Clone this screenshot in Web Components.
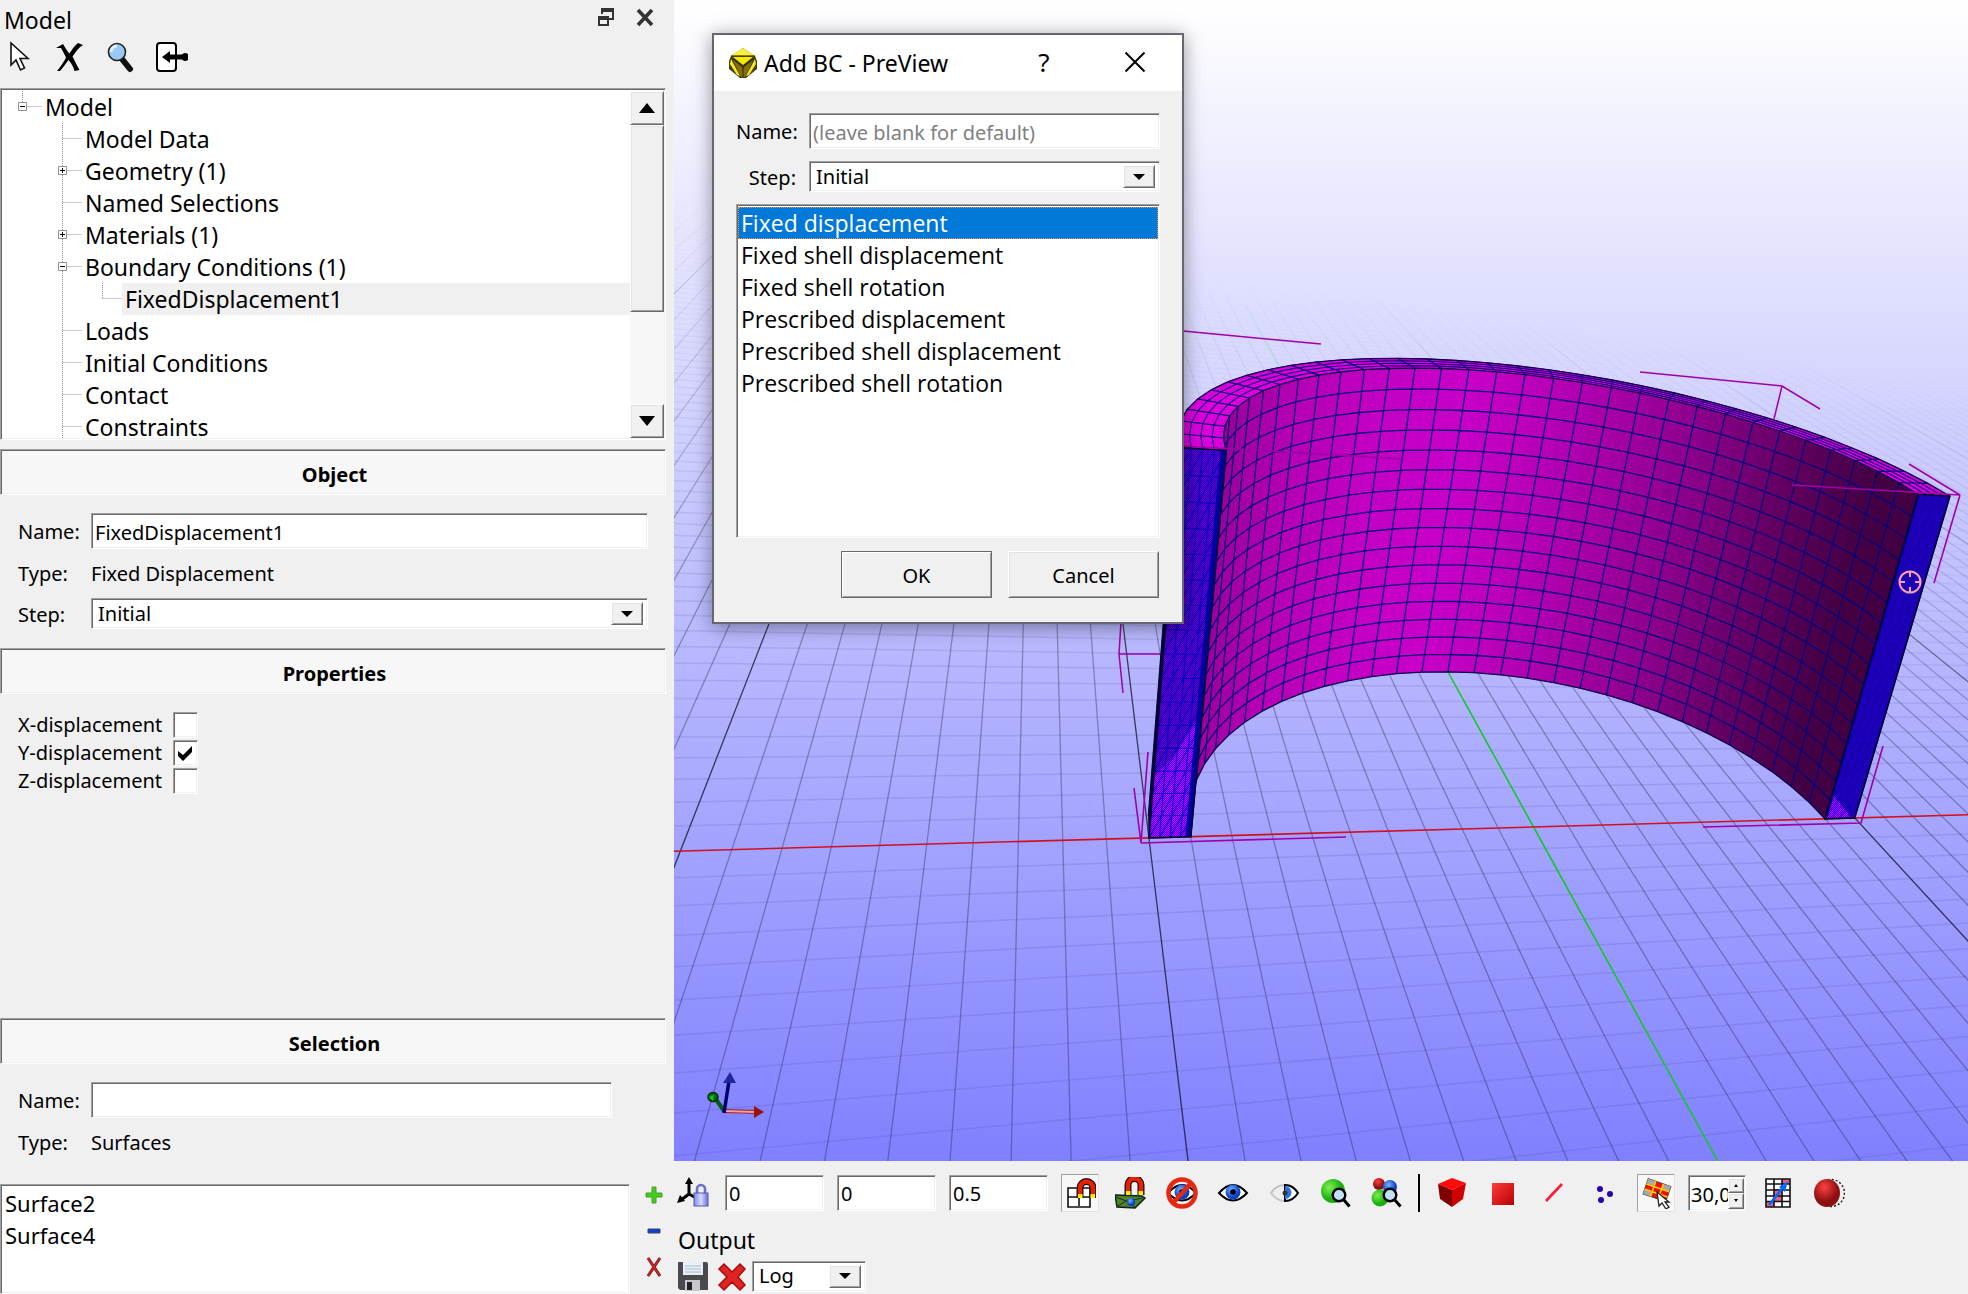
<!DOCTYPE html>
<html lang="en">
<head>
<meta charset="utf-8">
<title>PreView</title>
<style>
  html, body { margin: 0; height: 100%; background: #f0f0f0; overflow: hidden; }
  body { --ui: "Noto Sans", "Open Sans", sans-serif; --view: "Noto Sans", "Open Sans", sans-serif; color: #000; font: 20px/24px var(--ui); }
</style>
</head>
<body>
<preview-app></preview-app>
<script>
const base = `
  *, *::before { box-sizing: border-box; }
  svg { display: block; }
  button, input, select { font: inherit; color: inherit; margin: 0; border-radius: 0; outline: none; }
  .sunken { border: 1px solid; border-color: #a0a0a0 #fff #fff #a0a0a0; box-shadow: inset 1px 1px #696969, inset -1px -1px #f0f0f0; background: #fff; }
  .raised { border: 1px solid; border-color: #fff #696969 #696969 #fff; box-shadow: inset 1px 1px #e3e3e3, inset -1px -1px #a0a0a0; background: #f0f0f0; }
  input[type=text] { height: 36px; min-width: 0; padding: 2px 3px 0; }
  .combo { position: relative; display: block; height: 31px; }
  .combo select { appearance: none; width: 100%; height: 100%; padding: 0 40px 0 6px; line-height: 24px; }
  .combo i { position: absolute; right: 5px; top: 4px; bottom: 4px; width: 32px; display: grid; place-items: center; pointer-events: none; }
  .combo i::before { content: ""; border: 6px solid transparent; border-top-color: #000; border-bottom: 0; }
  .tool { display: grid; place-items: center; flex: none; width: 38px; height: 38px; padding: 0; border: 0; background: none; }
  .tool.on { border: 1px solid; border-color: #a0a0a0 #e3e3e3 #e3e3e3 #a0a0a0; background: #f7f7f7; }
`;
const combo = (id, opts) => `<span class="combo"><select class="sunken" id="${id}" aria-label="${id}">${opts.map(o => `<option>${o}</option>`).join('')}</select><i class="raised"></i></span>`;
function define(name, css, html, init) {
  const t = document.createElement('template');
  t.innerHTML = `<style>${base}${css}</style>${html}`;
  customElements.define(name, class extends HTMLElement {
    constructor() {
      super();
      const root = this.attachShadow({ mode: 'open' });
      root.append(t.content.cloneNode(true));
      if (init) init(root, this);
    }
  });
}

const magnet = (x, y) => `<g transform="translate(${x} ${y})"><path d="M3 18V8a6.500 6.500 0 0 1 13 0v10" fill="none" stroke="#111" stroke-width="7"/><path d="M3 17V8a6.500 6.500 0 0 1 13 0v9" fill="none" stroke="#e82000" stroke-width="4.500"/><path d="M1 14h4.500v4H1zM13.500 14H18v4h-4.500z" fill="#fe0"/></g>`;
const eye = `<path d="M2 16Q16 0 30 16Q16 31 2 16z" fill="#fff" stroke="#000" stroke-width="2"/><circle cx="16" cy="15" r="7.500" fill="url(#b)"/><circle cx="16" cy="15" r="2.800" fill="#001"/>`;
const lens = `<circle cx="20" cy="18" r="6.300" fill="#bfe0f6" stroke="#000" stroke-width="2.400"/><path d="M24.500 22.500l6 7" stroke="#000" stroke-width="3"/>`;
const defs = `<defs><radialGradient id="b" cx=".4" cy=".35"><stop offset="0" stop-color="#7ab4ff"/><stop offset="1" stop-color="#0840c8"/></radialGradient><radialGradient id="g" cx=".35" cy=".35"><stop offset="0" stop-color="#80f050"/><stop offset="1" stop-color="#18b010"/></radialGradient><radialGradient id="r" cx=".4" cy=".3"><stop offset="0" stop-color="#ff4040"/><stop offset="1" stop-color="#8c1010"/></radialGradient><linearGradient id="s" x2="1" y2="1"><stop offset="0" stop-color="#ff3c3c"/><stop offset="1" stop-color="#b80000"/></linearGradient><linearGradient id="l" x2="1"><stop offset="0" stop-color="#8088e0"/><stop offset=".5" stop-color="#d8daff"/><stop offset="1" stop-color="#6870d0"/></linearGradient></defs>`;
const icons = {
  cursor: `<path d="M8 2v22l5-5 4.500 10 4-2-4.500-9.500h8z" fill="#fff" stroke="#111" stroke-width="1.600"/>`,
  del: `<path d="M2 7l7-4c2 3 4 7 6.500 9.500C18 9 20 5 24 2l5 2c-5 3-8 8-10.500 11.500C21 20 23 25 25.500 29l-5 1c-1-4-3-8-6-11-2.500 3-5 7-8.500 11H3c4-5 7-9 9-13.500C10 12 8 9 7 7z" fill="#000"/>`,
  find: `<path d="M17 18l8 10" stroke="#111" stroke-width="6" stroke-linecap="round"/><circle cx="12" cy="11" r="8.500" fill="#9cc8f4" stroke="#222" stroke-width="1.600"/><path d="M6 11a6 6 0 0 1 6-6" stroke="#dcefff" stroke-width="3" fill="none"/>`,
  leave: `<rect x="1" y="2" width="19" height="28" rx="3" fill="#fff" stroke="#000" stroke-width="2"/><path d="M6 16l8-6v3.500h12a4 4 0 1 1 0 5H14V22z" fill="#000"/>`,
  axes: `<path d="M12 17V5M12 17L4 23M12 17l9 5" stroke="#000" stroke-width="3"/><path d="M12 0l4 7H8zM0 26l3-8 5 6z" fill="#000"/><path d="M20 17v-5a4 4 0 0 1 8 0v5" fill="none" stroke="#6870c8" stroke-width="2.600"/><rect x="17" y="16" width="14" height="13" fill="url(#l)" stroke="#5058b8"/>`,
  snapgrid: `<path d="M4 11h22v19H4zM4 20h22M15 10v19" fill="#fff" stroke="#111" stroke-width="1.600"/>${magnet(13, 3)}`,
  snapmesh: `<path d="M0 18l27 1 3 2-10 10-18-1z" fill="#4c8426" stroke="#122" stroke-width="1.500"/><path d="M1 20l10 4 17-3M3 29l8-5 9 6" stroke="#183010" fill="none"/>${magnet(10, 0)}<circle cx="16" cy="25" r="4" fill="url(#b)"/>`,
  hide: `${eye}<circle cx="16" cy="16" r="13.500" fill="none" stroke="#e52810" stroke-width="4.500"/><path d="M25 6L7 26" stroke="#e52810" stroke-width="4.500"/>`,
  show: eye,
  half: `<path d="M17 8Q8 8 3 16q6 8 14 8z" fill="#eee" stroke="#c4c4c4" stroke-width="2"/><path d="M17 8q8 0 13 8-5 8-13 8z" fill="#fff" stroke="#000" stroke-width="2"/><path d="M17 9a6.500 6.500 0 0 1 0 13z" fill="#2a70e8"/><circle cx="17" cy="16" r="2.500" fill="#333"/>`,
  zoomone: `<circle cx="14" cy="14" r="12" fill="url(#g)"/>${lens}`,
  zoommany: `<circle cx="9" cy="7" r="6" fill="url(#r)"/><circle cx="20" cy="10" r="7" fill="url(#b)"/><circle cx="10" cy="21" r="8.500" fill="url(#g)"/>${lens}`,
  cube: `<path d="M2 7l14-6 14 5-14 7z" fill="#ff0a0a"/><path d="M2 7l14 6v17L4 22z" fill="#7e0000"/><path d="M16 13l14-7-3 16-11 8z" fill="#d00000"/>`,
  square: `<path d="M5 6h22v22H5z" fill="url(#s)"/>`,
  line: `<path d="M8 24L24 7" stroke="#ff1838" stroke-width="2.600"/>`,
  dots: `<g fill="#2800b0"><circle cx="11" cy="12" r="3"/><circle cx="21" cy="17" r="3"/><circle cx="12" cy="23" r="3"/></g>`,
  pick: `<g transform="rotate(19 16 16)"><path d="M4 5h24v16H4z" fill="#ee1000" stroke="#444"/><path d="M4 5h8v5H4zM20 5h8v5h-8zM4 16h8v5H4z" fill="#a8a8a8"/><path d="M4 10.500h24M4 16h24M12 5v16M20 5v16" stroke="#fc0" stroke-width="1.600"/></g><path d="M17 15l2 14 3-3 4 6 3-2-4-5h4z" fill="#fff" stroke="#222" stroke-width="1.300"/>`,
  table: `<path d="M4 2h24v28H4z" fill="#fff"/><path d="M4 25h8v5H4zM12 12h8v12h-8zM20 2h8v5h-8z" fill="#e86080"/><path d="M4 2h24v28H4zM4 7h24M4 13h24M4 19h24M4 24.500h24M12 2v28M20 2v28" fill="none" stroke="#111" stroke-width="1.600"/><path d="M7 28L22 9" stroke="#0868ff" stroke-width="2.600"/><path d="M26 4l-3 11-6-5z" fill="#0868ff"/>`,
  ball: `<circle cx="18" cy="16" r="13.500" fill="none" stroke="#222" stroke-width="1.500" stroke-dasharray="2 2"/><ellipse cx="14" cy="16" rx="13" ry="14" fill="url(#r)"/>`,
  save: `<path d="M1 2h28a2 2 0 0 1 2 2v26H3l-2-2z" fill="#4a4a4e"/><path d="M6 2h20v13H6z" fill="#e8eff6"/><path d="M8 6h16M8 9h16M8 12h16" stroke="#a9bccb"/><path d="M8 20h15v11H8z" fill="#c8c8cc"/><path d="M10 22h5v8h-5z" fill="#222"/>`,
  cross: `<path d="M8 4l8 8 8-8 5 5-7 8 7 8-5 5-8-8-8 8-5-5 8-8-8-8z" fill="#e02424" stroke="#a80c0c" stroke-width="1.500"/>`,
  plus: `<path d="M14 8h4v6h6v4h-6v6h-4v-6H8v-4h6z" fill="#3ed01c" stroke="#4a9a30"/>`,
  minus: `<path d="M10 14h12v4H10z" fill="#0a3cd8" stroke="#446"/>`,
  clear: `<path d="M10 7l12 18M22 7L10 25" stroke="#7c1414" stroke-width="3"/><path d="M10 7l12 18M22 7L10 25" stroke="#c42a2a" stroke-width="1.500"/>`,
  float: `<path d="M12 12V7h11v10h-5" fill="none" stroke="#333" stroke-width="2"/><path d="M11 6h13v4H11zM8 14h11v4H8z" fill="#333"/><path d="M9 15v8h9v-8" fill="none" stroke="#333" stroke-width="2"/>`,
  shut: `<path d="M9 8l14 15M23 8L9 23" stroke="#333" stroke-width="3.600"/>`,
};
customElements.define('tool-icon', class extends HTMLElement {
  constructor() { super(); this.attachShadow({ mode: 'open' }); }
  connectedCallback() {
    this.shadowRoot.innerHTML = `<style>:host{display:block;width:32px;height:32px}svg{display:block}</style><svg width="32" height="32" viewBox="0 0 32 32" aria-hidden="true">${defs}${icons[this.getAttribute('name')]}</svg>`;
  }
});
const tool = (name, label, on) => `<button class="tool${on ? ' on' : ''}" aria-label="${label}"><tool-icon name="${name}"></tool-icon></button>`;

define('section-title', `
  :host { display: block; }
  h2.sunken { margin: 0; height: 46px; display: grid; place-items: center; font: bold 20px/24px var(--ui); background: #f7f7f7; padding: 5px 0 0 3px; }
`, `<h2 class="sunken"><slot></slot></h2>`);

define('model-tree', `
  :host { display: flex; height: 352px; font: 23px/32px var(--view); overflow: hidden; padding: 2px 1px 1px 1px; }
  .rows { flex: 1; overflow: hidden; }
  .row { display: flex; height: 32px; }
  .row b { flex: 1; font-weight: 400; padding-left: 3px; }
  .row.sel b { background: #f0f0f0; }
  .bar { width: 34px; display: flex; flex-direction: column; background: #f7f7f7; }
  .bar button { height: 34px; padding: 0; display: grid; place-items: center; }
  .thumb { height: 187px; }
  .gap { flex: 1; }
`, `<div class="rows" role="tree"></div><div class="bar"><button class="raised" aria-label="Scroll up"><svg width="16" height="10"><path d="M0 10L8 0l8 10z"/></svg></button><div class="raised thumb"></div><div class="gap"></div><button class="raised" aria-label="Scroll down"><svg width="16" height="10"><path d="M0 0l8 10 8-10z"/></svg></button></div>`,
root => {
  const data = [[0, '-', 'Model'], [1, '', 'Model Data'], [1, '+', 'Geometry (1)'], [1, '', 'Named Selections'], [1, '+', 'Materials (1)'], [1, '-', 'Boundary Conditions (1)'], [2, '', 'FixedDisplacement1'], [1, '', 'Loads'], [1, '', 'Initial Conditions'], [1, '', 'Contact'], [1, '', 'Constraints']];
  root.querySelector('.rows').innerHTML = data.map(([l, m, t]) => {
    const x = 20.5 + 40 * l, w = 40 + 40 * l;
    let p = `M${x} 15.5H${w}`;
    if (l !== 1) p += `M${x} 0V16`;
    if (l > 0) p += 'M60.5 0V32';
    const box = m ? `<path d="M${x - 4} 11.5h8v8h-8z" fill="#fff" stroke="#909090"/><path d="M${x - 2.5} 15.5h5${m === '+' ? `M${x} 13v5` : ''}" stroke="#000"/>` : '';
    return `<div class="row${l === 2 ? ' sel' : ''}" role="treeitem"><svg width="${w}" height="32"><path d="${p}" stroke="#909090" stroke-dasharray="1 1"/>${box}</svg><b>${t}</b></div>`;
  }).join('');
});

define('model-dock', `
  :host { display: flex; flex-direction: column; min-height: 0; }
  header { display: flex; align-items: center; height: 38px; padding: 0 10px 0 4px; font: 23px/26px var(--view); }
  header span { flex: 1; padding-top: 2px; }
  header .tool { height: 36px; margin-bottom: 2px; }
  header .tool + .tool { margin-left: 1px; }
  .tools { display: flex; gap: 13px; height: 50px; }
  .body { flex: 1; display: flex; flex-direction: column; width: 666px; min-height: 0; }
  model-tree { margin-bottom: 9px; }
  .form { display: grid; grid-template-columns: 63px 1fr; column-gap: 10px; align-items: center; padding: 18px 18px 19px; }
  .form label { padding-top: 2px; }
  .form .type { height: 49px; line-height: 50px; }
  .checks { flex: 1; display: flex; flex-direction: column; padding: 17px 18px; }
  .checks label { display: flex; align-items: center; gap: 9px; height: 28px; white-space: nowrap; }
  .checks span { width: 146px; }
  .checks input { appearance: none; width: 25px; height: 26px; }
  .checks svg { grid-area: 1/1; pointer-events: none; }
  .box { display: grid; place-items: center; }
  .box input { grid-area: 1/1; }
  .s2 { padding-right: 54px; padding-bottom: 17px; }
  .pick { display: flex; height: 110px; }
  ul { flex: 1; margin: 0; padding: 2px 4px; list-style: none; font: 22px/32px var(--view); }
  .ops { width: 36px; margin: -7px -6px 0 6px; display: flex; flex-direction: column; align-items: center; }
  .ops .tool { height: 36px; }
`, `
  <header><span>Model</span>${tool('float', 'Float')}${tool('shut', 'Close')}</header>
  <div class="tools">${tool('cursor', 'Select')}${tool('del', 'Delete')}${tool('find', 'Find')}${tool('leave', 'Export')}</div>
  <div class="body">
    <model-tree class="sunken"></model-tree>
    <section-title>Object</section-title>
    <div class="form">
      <label for="on">Name:</label><input class="sunken" type="text" id="on" value="FixedDisplacement1">
      <span class="type">Type:</span><span class="type">Fixed Displacement</span>
      <label for="Step">Step:</label>${combo('Step', ['Initial'])}
    </div>
    <section-title>Properties</section-title>
    <div class="checks">
      <label><span>X-displacement</span><input class="sunken" type="checkbox"></label>
      <label><span>Y-displacement</span><div class="box"><input class="sunken" type="checkbox" checked><svg width="15" height="15"><path d="M0 5l5 4 9-9v6l-9 9-5-5z"/></svg></div></label>
      <label><span>Z-displacement</span><input class="sunken" type="checkbox"></label>
    </div>
    <section-title>Selection</section-title>
    <div class="form s2">
      <label for="sn">Name:</label><input class="sunken" type="text" id="sn">
      <span class="type">Type:</span><span class="type">Surfaces</span>
    </div>
    <div class="pick"><ul class="sunken"><li>Surface2</li><li>Surface4</li></ul>
      <div class="ops">${tool('plus', 'Add')}${tool('minus', 'Remove')}${tool('clear', 'Clear')}</div></div>
  </div>`);

define('scene-view', `
  :host { display: block; min-height: 0; overflow: hidden; background: linear-gradient(#fff, #8080ff); }
  svg { width: 100%; height: 100%; }
`, `<svg viewBox="674 0 1294 1161" preserveAspectRatio="xMinYMin slice" role="img" aria-label="Half cylinder mesh"></svg>`,
root => {
  /* Projection of world x, y and height (0..1) to view coordinates. */
  const P = (x, y, z) => {
    const w = 1 + .00897 * x + .02328 * y - .0985 * z;
    return [(1533.5 + 48.76 * x + 24.19 * y - 88.35 * z) / w, (827 + 6.43 * x - 1.606 * y - 399.4 * z) / w];
  };
  const f = p => p[0].toFixed(1) + ' ' + p[1].toFixed(1);
  const L = (a, b) => `M${f(a)}L${f(b)}`;
  let minorX = '', major = '', minorY = '';
  for (let i = -45; i <= 95; i++) {
    if (!i) continue;
    const s = L(P(i, -15, 0), P(i, 75, 0));
    if (i % 10) minorX += s; else major += s;
  }
  for (let j = -15; j <= 75; j++) if (j) minorY += L(P(-45, j, 0), P(95, j, 0));
  const N = 32, M = 16, ri = 9, ro = 10;
  const A = (i, r, z) => { const t = Math.PI * (1 - i / N); return P(r * Math.cos(t), r * Math.sin(t), z); };
  const quad = (pts, c) => `<path d="M${pts.map(f).join('L')}z" fill="${c}" stroke="${c}" stroke-width=".6"/>`;
  const stops = [[0, 140], [4, 158], [8, 180], [12, 196], [15, 200], [17, 190], [20, 168], [23, 142], [26, 105], [28, 84], [30, 68], [32, 66]];
  const shade = i => { let k = 1; while (stops[k][0] < i) k++; const [a, u] = stops[k - 1], [b, v] = stops[k]; const g = Math.round(u + (v - u) * (i - a) / (b - a)); return `rgb(${g},0,${g})`; };
  let back = '', inner = '', top = '', mesh = '', tmesh = '';
  for (let i = 0; i < N; i++) {
    back += quad([A(i, ro, 0), A(i + 1, ro, 0), A(i + 1, ro, 1), A(i, ro, 1)], '#08003a');
  }
  for (let i = 0; i < N * 2; i++) {
    const a = i / 2, b = a + .5;
    inner += quad([A(a, ri, 0), A(b, ri, 0), A(b, ri, 1), A(a, ri, 1)], shade(a + .25));
    top += quad([A(a, ri, 1), A(b, ri, 1), A(b, ro, 1), A(a, ro, 1)], '#dc00dc');
  }
  const arc = (r, z) => { let s = ''; for (let i = 0; i <= N; i++) s += (i ? 'L' : 'M') + f(A(i, r, z)); return s; };
  for (let i = 0; i <= N; i++) {
    mesh += L(A(i, ri, 0), A(i, ri, 1));
    tmesh += L(A(i, ri, 1), A(i, ro, 1));
  }
  for (let k = 1; k < M; k++) mesh += arc(ri, k / M);
  let tarcs = '';
  for (let k = 1; k < 4; k++) tarcs += arc(ri + k / 4, 1);
  const rim = arc(ri, 0) + arc(ri, 1) + arc(ro, 1);
  const poly = pts => 'M' + pts.map(f).join('L') + 'z';
  const end = (s, pat, bright) => {
    const o = s * ro, n = s * ri, x0 = s < 0 ? -10 : 9;
    let g = '', d = '';
    for (let k = 1; k < M; k++) g += L(P(o, 0, k / M), P(n, 0, k / M));
    for (let k = 1; k < 4; k++) g += L(P(s * (ri + k / 4), 0, 0), P(s * (ri + k / 4), 0, 1));
    for (let k = 0; k < M; k++) for (let q = 0; q < 4; q++) d += L(P(x0 + q / 4, 0, k / M), P(x0 + (q + 1) / 4, 0, (k + 1) / M));
    return `<path d="${poly([P(o, 0, 0), P(n, 0, 0), P(n, 0, 1), P(o, 0, 1)])}" fill="url(#${pat})"/><path d="${poly(bright)}" fill="url(#pm)"/>
      <path d="${g}${d}" stroke="#0000c0" stroke-width="1.200" fill="none" opacity="${s < 0 ? .8 : .4}"/>
      <path d="${L(P(n, 0, 0), P(n, 0, 1))}" stroke="#0000a0" stroke-width="${s < 0 ? 5 : 2}" transform="translate(${s < 0 ? -3 : 1} 0)"/>
      <path d="${poly([P(o, 0, 0), P(n, 0, 0), P(n, 0, 1), P(o, 0, 1)])}" fill="none" stroke="#000030" stroke-width="1.600"/>`;
  };
  root.querySelector('svg').innerHTML = `
  <defs>
    <linearGradient id="fade" gradientUnits="userSpaceOnUse" x1="1360" y1="290" x2="1300" y2="680"><stop offset="0" stop-color="#000"/><stop offset=".35" stop-color="#444"/><stop offset="1" stop-color="#fff"/></linearGradient>
    <mask id="m" maskUnits="userSpaceOnUse" x="674" y="0" width="1294" height="1161"><path d="M674 0h1294v1161H674z" fill="url(#fade)"/></mask>
    <pattern id="pl" width="2" height="2" patternUnits="userSpaceOnUse"><path d="M0 0h2v2H0z" fill="#1800e0"/><path d="M0 0h1v1H0zM1 1h1v1H1z" fill="#7800a8"/></pattern>
    <pattern id="pr" width="2" height="2" patternUnits="userSpaceOnUse"><path d="M0 0h2v2H0z" fill="#0000e0"/><path d="M0 0h1v1H0zM1 1h1v1H1z" fill="#400088"/></pattern>
    <pattern id="pm" width="2" height="2" patternUnits="userSpaceOnUse"><path d="M0 0h2v2H0z" fill="#2800f0"/><path d="M0 0h1v1H0zM1 1h1v1H1z" fill="#e000f0"/></pattern>
  </defs>
  <g mask="url(#m)" fill="none">
    <path d="${minorY}" stroke="#303070" stroke-opacity=".12" stroke-width="1.500"/>
    <path d="${minorX}" stroke="#202040" stroke-opacity=".36" stroke-width="1.300"/>
    <path d="${major}" stroke="#101020" stroke-opacity=".75" stroke-width="1.300"/>
    <path d="${L(P(0, -15, 0), P(0, 60, 0))}" stroke="#14c828" stroke-width="1.600"/>
  </g>
  <path d="${L(P(-25, 0, 0), P(60, 0, 0))}" stroke="#d01020" stroke-width="1.600"/>
  <g stroke="#a000a8" stroke-width="1.500" fill="none"><path d="M1121 622l-2 32 4 39M1119 654h41M1774 419l8-33M1183 331l138 13M1640 372l142 14 38 23"/></g>
  ${back}${inner}
  <path d="${mesh}" stroke="#08007c" stroke-width="1.300" fill="none"/>
  ${top}
  <path d="${tmesh}" stroke="#10007c" stroke-width="1.200" fill="none"/>
  <path d="${tarcs}" stroke="#10007c" stroke-width="1.100" fill="none"/>
  <path d="${rim}" stroke="#08004c" stroke-width="1.300" fill="none"/>
  ${end(-1, 'pl', [P(-10, 0, 0), P(-9.1, 0, 0), P(-9.1, 0, .33), P(-9.5, 0, .24), P(-10, 0, .17)])}
  ${end(1, 'pr', [P(9.05, 0, 0), P(9.9, 0, 0), P(9.05, 0, .08)])}
  <g stroke="#a000a8" stroke-width="1.600" fill="none">
    <path d="M1183 446l219 13" stroke="#9c00a4"/>
    <path d="M1909 464l51 31-168-10M1960 495l-26 88M1883 746l-22 77-158 4M1148 752l-7 91-7-55M1141 843l205-6"/>
  </g>
  <g stroke="#f8a0b0" stroke-width="2" fill="none"><circle cx="1910" cy="582" r="10.500"/><path d="M1910 571v6M1910 587v6M1899 582h6M1915 582h6"/></g>
  <g fill="none"><path d="M724 1111l-9-13" stroke="#006010" stroke-width="4"/><path d="M724 1111l35 1" stroke="#a02028" stroke-width="4"/><path d="M725 1111l30 1" stroke="#f0a0a0" stroke-width="2"/><path d="M724 1113l5-32" stroke="#000070" stroke-width="3.500"/></g>
  <ellipse cx="713" cy="1097" rx="5" ry="4.500" fill="#006c10" stroke="#002c08" stroke-width="1.500"/><path d="M709 1097l4 4 1-6z" fill="#10c820"/><path d="M754 1106l10 6-10 6z" fill="#981010"/><path d="M723 1083l7-11 6 11z" fill="#2028a0"/>`;
});

define('view-toolbar', `
  :host { display: flex; align-items: center; gap: 13px; height: 63px; }
  input { width: 99px; flex: none; }
  .sep { width: 2px; height: 38px; background: #000; }
  .spin { display: flex; width: 58px; height: 36px; padding: 2px 1px 1px 2px; }
  .spin input[type=text] { flex: 1; width: 0; height: 100%; border: 0; padding: 2px 0 0; background: none; }
  .spin div { width: 16px; display: flex; flex-direction: column; }
  .spin button { flex: 1; padding: 0; display: grid; place-items: center; }
`, `${tool('axes', 'Lock axes')}
  <input class="sunken" type="text" aria-label="X" value="0"><input class="sunken" type="text" aria-label="Y" value="0"><input class="sunken" type="text" aria-label="Z" value="0.5">
  ${tool('snapgrid', 'Snap to grid', 1)}${tool('snapmesh', 'Snap to mesh')}${tool('hide', 'Hide')}${tool('show', 'Show')}${tool('half', 'Toggle')}${tool('zoomone', 'Zoom selection')}${tool('zoommany', 'Zoom all')}
  <span class="sep"></span>
  ${tool('cube', 'Parts')}${tool('square', 'Surfaces')}${tool('line', 'Edges')}${tool('dots', 'Nodes')}${tool('pick', 'Pick', 1)}
  <span class="spin sunken"><input type="text" aria-label="Angle" value="30,0"><div><button class="raised" aria-label="Increase"><svg width="4" height="3"><path d="M0 3l2-3 2 3z"/></svg></button><button class="raised" aria-label="Decrease"><svg width="4" height="3"><path d="M0 0l2 3 2-3z"/></svg></button></div></span>
  ${tool('table', 'Map')}${tool('ball', 'Shape')}`);

define('output-dock', `
  :host { display: block; height: 70px; overflow: hidden; }
  h3 { margin: 0; padding-left: 4px; font: 400 23px/32px var(--view); }
  .row { display: flex; align-items: center; padding-top: 4px; }
  .tool { height: 32px; }
  .tool + .tool { margin-left: 1px; }
  .combo { width: 114px; margin-left: 1px; }
`, `<h3>Output</h3><div class="row">${tool('save', 'Save')}${tool('cross', 'Clear')}${combo('Log', ['Log'])}</div>`);

define('bc-dialog', `
  :host { display: block; width: 472px; border: 2px solid #66666e; background: #f0f0f0; box-shadow: 0 3px 18px rgba(0,0,0,.4); }
  header { display: flex; align-items: center; height: 56px; padding: 0 17px 0 14px; background: #fff; font: 23px/28px var(--view); }
  h1 { flex: 1; margin: 0 0 0 6px; font: inherit; }
  header button { width: 60px; height: 50px; padding: 0; border: 0; background: none; display: grid; place-items: center; margin: 0 0 2px 31px; }
  header .q { font: 26px/30px var(--view); }
  .body { padding: 22px 22px 24px; }
  form { display: grid; grid-template-columns: 60px 1fr; gap: 12px 13px; align-items: center; }
  form label { text-align: right; padding-top: 2px; }
  ul { margin: 12px 0 0; padding: 2px 1px 1px; height: 334px; list-style: none; font: 23px/32px "Open Sans", sans-serif; }
  li { padding-left: 3px; }
  li.sel { background: #0078d7; color: #fff; outline: 1px dotted #e8954a; outline-offset: -1px; }
  input::placeholder { color: #808080; opacity: 1; }
  .btns { display: flex; justify-content: flex-end; gap: 16px; padding: 13px 1px 0 0; }
  .btns button { width: 151px; height: 47px; padding-top: 3px; }
  .btns .def { box-shadow: inset 1px 1px #fff, inset -1px -1px #a0a0a0; border-color: #696969; }
`, `<header><svg width="30" height="32" viewBox="0 0 30 32"><path d="M15 1l12 8 2 5v8L18 31h-6L1 22v-8l2-5z" fill="#4a3e08"/><path d="M15 1l11 7H4z" fill="#f8ee40"/><path d="M5 10h20l-10 8z" fill="#f4ec00"/><path d="M3 8.500h24" stroke="#8a8000"/><path d="M3 12l9 17-3-1-7-11zM27 12l-9 17 3-1 7-11z" fill="#f4ec20"/><path d="M5 13l10 8v9h-2zM25 13l-10 8v9h2z" fill="#84700a"/><path d="M4 11l11 8.500L26 11M15 20v10" fill="none" stroke="#2a2400"/></svg>
  <h1>Add BC - PreView</h1><button class="q" aria-label="Help">?</button><button aria-label="Close"><svg width="22" height="22"><path d="M1.500 1.500l19 19M20.500 1.500l-19 19" stroke="#000" stroke-width="2"/></svg></button></header>
  <div class="body"><form><label for="n">Name:</label><input class="sunken" type="text" id="n" placeholder="(leave blank for default)">
  <label for="Step">Step:</label>${combo('Step', ['Initial'])}</form>
  <ul class="sunken"><li class="sel">Fixed displacement</li><li>Fixed shell displacement</li><li>Fixed shell rotation</li><li>Prescribed displacement</li><li>Prescribed shell displacement</li><li>Prescribed shell rotation</li></ul>
  <div class="btns"><button class="raised def">OK</button><button class="raised">Cancel</button></div></div>`);

define('preview-app', `
  :host { display: flex; height: 100vh; background: #f0f0f0; }
  model-dock { flex: 0 0 674px; }
  main { flex: 1; min-width: 0; display: flex; flex-direction: column; position: relative; }
  scene-view { flex: 1; }
  bc-dialog { position: absolute; left: 38px; top: 33px; }
`, `<model-dock></model-dock><main><scene-view></scene-view><view-toolbar></view-toolbar><output-dock></output-dock><bc-dialog></bc-dialog></main>`);
</script>
</body>
</html>
